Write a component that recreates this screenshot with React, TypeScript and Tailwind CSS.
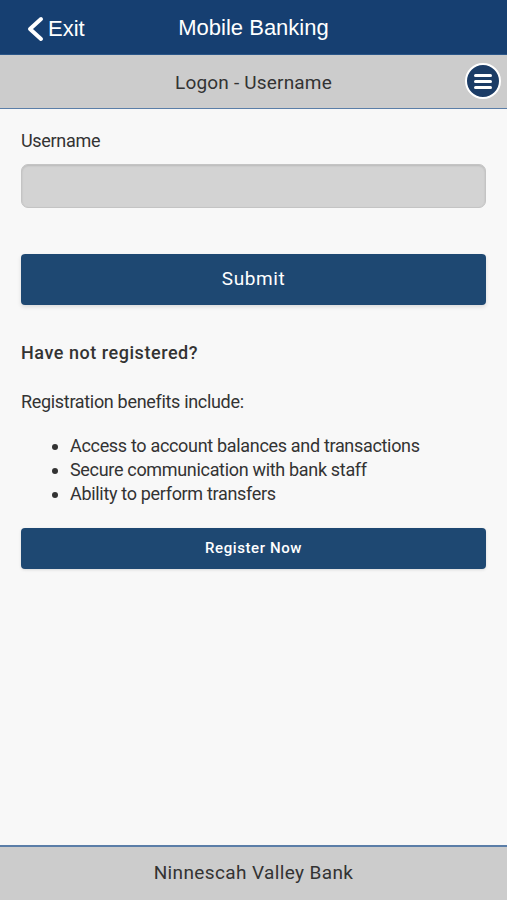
import React from "react";

const benefits = [
  "Access to account balances and transactions",
  "Secure communication with bank staff",
  "Ability to perform transfers",
];

const App: React.FC = () => {
  return (
    <div
      className="flex flex-col h-[900px] w-full bg-[#f8f8f8] text-[#333333]"
      style={{ fontFamily: "Roboto, 'Noto Sans', sans-serif" }}
    >
      {/* top bar */}
      <div className="relative flex items-center justify-center h-[55px] bg-[#163f71] border-b border-[#2b5688] text-white font-['Liberation_Sans',Arial,sans-serif]">
        <button className="absolute left-[26px] top-[16px] flex items-center gap-[4px] text-[22px] leading-none">
          <svg width="18" height="26" viewBox="0 0 18 26" fill="none" stroke="white" strokeWidth="4" strokeLinecap="round" strokeLinejoin="round">
            <path d="M15 3 L4 13 L15 23" />
          </svg>
          <span>Exit</span>
        </button>
        <span className="text-[22px]">Mobile Banking</span>
      </div>

      {/* sub header */}
      <div className="relative flex items-center justify-center h-[54px] bg-[#cccccc] border-b border-[#5b7ea8]">
        <span className="pt-[3px] text-[19px] tracking-[0.01em] text-[#333333]">Logon - Username</span>
        <button className="absolute right-[6px] top-[8px] flex flex-col items-center justify-center gap-[3px] w-[36px] h-[36px] rounded-full bg-[#1b3c66] border-2 border-white">
          <span className="block w-[18px] h-[3px] rounded-full bg-white" />
          <span className="block w-[18px] h-[3px] rounded-full bg-white" />
          <span className="block w-[18px] h-[3px] rounded-full bg-white" />
        </button>
      </div>

      {/* body */}
      <div className="flex-1 px-[21px] pt-[20px] tracking-[-0.02em]">
        <label className="block text-[18px] leading-[24px] text-[#333333]">Username</label>
        <input
          type="text"
          className="mt-[11px] block w-full h-[44px] rounded-[7px] bg-[#d3d3d3] border border-[#c4c4c4] shadow-[inset_0_1px_2px_rgba(0,0,0,0.12)] px-3 outline-none"
        />

        <button className="mt-[46px] block w-full h-[51px] rounded-[4px] bg-[#1e4872] text-white text-[19px] tracking-[0.03em] shadow-[0_2px_4px_rgba(0,0,0,0.12)]">
          Submit
        </button>

        <h3 className="mt-[36px] text-[18px] leading-[24px] font-medium tracking-[0.03em] text-[#333333]">Have not registered?</h3>

        <p className="mt-[25px] text-[18px] leading-[24px] text-[#333333]">Registration benefits include:</p>

        <ul className="mt-[20px] pl-[30px] list-disc list-outside text-[18px] leading-[24px] text-[#333333] ml-[19px]">
          {benefits.map(b => (
            <li key={b}>{b}</li>
          ))}
        </ul>

        <button className="mt-[22px] block w-full h-[41px] rounded-[4px] bg-[#1e4872] text-white text-[15px] font-medium tracking-[0.04em] shadow-[0_1px_3px_rgba(0,0,0,0.12)]">
          Register Now
        </button>
      </div>

      {/* footer */}
      <div className="flex items-center justify-center h-[55px] bg-[#cccccc] border-t-2 border-[#5b7ea8]">
        <span className="text-[19px] tracking-[0.02em] text-[#333333]">Ninnescah Valley Bank</span>
      </div>
    </div>
  );
};

export default App;
